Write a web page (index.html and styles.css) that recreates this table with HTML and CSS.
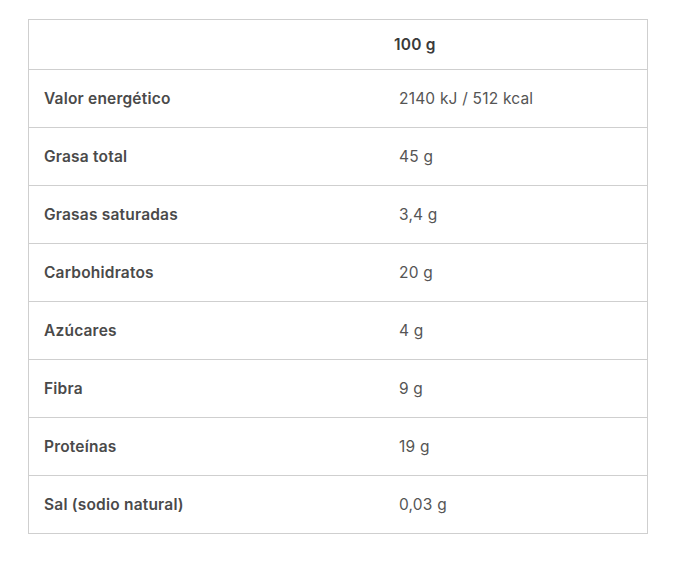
FILE: index.html
```html
<!DOCTYPE html>
<html lang="es">
<head>
<meta charset="utf-8">
<link rel="stylesheet" href="styles.css">
</head>
<body>
<div class="wrap">
<table class="nutri">
<thead>
<tr><th class="h-empty"></th><th class="h-val">100 g</th></tr>
</thead>
<tbody>
<tr><td class="lab">Valor energético</td><td class="val">2140 kJ / 512 kcal</td></tr>
<tr><td class="lab">Grasa total</td><td class="val">45 g</td></tr>
<tr><td class="lab">Grasas saturadas</td><td class="val">3,4 g</td></tr>
<tr><td class="lab">Carbohidratos</td><td class="val">20 g</td></tr>
<tr><td class="lab">Azúcares</td><td class="val">4 g</td></tr>
<tr><td class="lab">Fibra</td><td class="val">9 g</td></tr>
<tr><td class="lab">Proteínas</td><td class="val">19 g</td></tr>
<tr><td class="lab">Sal (sodio natural)</td><td class="val">0,03 g</td></tr>
</tbody>
</table>
</div>
</body>
</html>
```
FILE: styles.css
```css
html, body { margin: 0; padding: 0; background: #fff; }
body { font-family: "Inter", "Noto Sans", sans-serif; font-size: 15.5px; letter-spacing: 0.2px; color: #4a4a4a; }
.wrap { padding: 19px 0 0 28px; }
.nutri {
  width: 620px;
  border-collapse: collapse;
  border: 1px solid #cfcfcf;
  table-layout: fixed;
}
.nutri tr { border-bottom: 1px solid #cfcfcf; }
.nutri th { height: 49px; padding: 0; text-align: left; font-weight: 600; color: #3a3a3a; }
.h-empty { width: 355px; }
.h-val { padding-left: 10px !important; }
.nutri td { height: 57px; padding: 0; vertical-align: middle; }
.lab { padding-left: 15px !important; font-weight: 600; color: #4a4a4a; }
.val { padding-left: 15px !important; color: #555; font-weight: 400; }
```
